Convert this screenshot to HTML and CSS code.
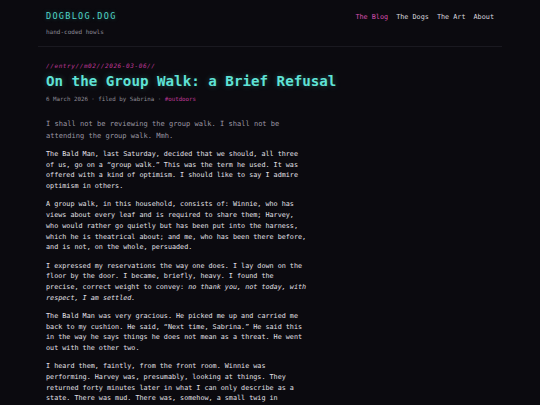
FILE: index.html
```html
<!DOCTYPE html>
<html lang="en">
<head>
<meta charset="utf-8">
<title>On the Group Walk: a Brief Refusal</title>
<link rel="stylesheet" href="styles.css">
</head>
<body>
<div class="wrap">
  <header class="site-header">
    <div class="brand">
      <div class="logo">DOGBLOG.DOG</div>
      <div class="tagline">hand-coded howls</div>
    </div>
    <nav class="nav">
      <a class="nav-link active" href="#">The Blog</a>
      <a class="nav-link" href="#">The Dogs</a>
      <a class="nav-link" href="#">The Art</a>
      <a class="nav-link" href="#">About</a>
    </nav>
  </header>
  <article class="entry">
    <div class="entry-label">//entry//m02//2026-03-06//</div>
    <h1 class="entry-title">On the Group Walk: a Brief Refusal</h1>
    <div class="entry-meta">6 March 2026 · filed by Sabrina · <span class="tag">#outdoors</span></div>
    <p class="lead">I shall not be reviewing the group walk. I shall not be attending the group walk. Mmh.</p>
    <p>The Bald Man, last Saturday, decided that we should, all three of us, go on a “group walk.” This was the term he used. It was offered with a kind of optimism. I should like to say I admire optimism in others.</p>
    <p>A group walk, in this household, consists of: Winnie, who has views about every leaf and is required to share them; Harvey, who would rather go quietly but has been put into the harness, which he is theatrical about; and me, who has been there before, and is not, on the whole, persuaded.</p>
    <p>I expressed my reservations the way one does. I lay down on the floor by the door. I became, briefly, heavy. I found the precise, correct weight to convey: <em>no thank you, not today, with respect, I am settled.</em></p>
    <p>The Bald Man was very gracious. He picked me up and carried me back to my cushion. He said, “Next time, Sabrina.” He said this in the way he says things he does not mean as a threat. He went out with the other two.</p>
    <p>I heard them, faintly, from the front room. Winnie was performing. Harvey was, presumably, looking at things. They returned forty minutes later in what I can only describe as a state. There was mud. There was, somehow, a small twig in Harvey’s ear.</p>
  </article>
</div>
</body>
</html>
```

FILE: styles.css
```css
html, body {
  margin: 0;
  padding: 0;
  background: #0b0a0f;
}
body {
  font-family: "DejaVu Sans Mono", "Liberation Mono", monospace;
  color: #d6d4dc;
}
.wrap {
  width: 464px;
  margin: 0 auto;
}
.site-header {
  display: flex;
  justify-content: space-between;
  align-items: flex-start;
  padding: 10px 8px 10px 8px;
  border-bottom: 1px solid #1a1920;
}
.logo {
  font-size: 8.5px;
  line-height: 12px;
  letter-spacing: 1.3px;
  color: #4fd6c8;
  text-shadow: 0 0 4px rgba(79, 214, 200, 0.35);
}
.tagline {
  margin-top: 6px;
  font-size: 6px;
  line-height: 8px;
  color: #8d8a96;
}
.nav {
  display: flex;
  gap: 8px;
  padding-top: 1px;
}
.nav-link {
  font-size: 6.8px;
  line-height: 12px;
  color: #d8d6de;
  text-decoration: none;
}
.nav-link.active {
  color: #d94fae;
}
.entry {
  padding: 15px 8px 0 8px;
  width: 262px;
}
.entry-label {
  font-size: 6px;
  line-height: 8px;
  letter-spacing: 0.6px;
  font-style: italic;
  color: #c0399a;
}
.entry-title {
  margin: 2px 0 0 0;
  font-size: 14.2px;
  line-height: 18px;
  font-weight: bold;
  color: #5fe3d6;
  white-space: nowrap;
  text-shadow: 0 0 6px rgba(95, 227, 214, 0.3);
}
.entry-meta {
  margin-top: 5px;
  font-size: 5.8px;
  line-height: 8px;
  color: #8d8a96;
}
.tag {
  color: #c0399a;
}
p {
  margin: 0 0 7.6px 0;
  font-size: 6.75px;
  line-height: 10.7px;
  color: #e2e0e8;
}
p.lead {
  margin-top: 15px;
  margin-bottom: 8px;
  font-size: 7.05px;
  line-height: 11.5px;
  color: #9a97a3;
}
em {
  font-style: italic;
}
```
